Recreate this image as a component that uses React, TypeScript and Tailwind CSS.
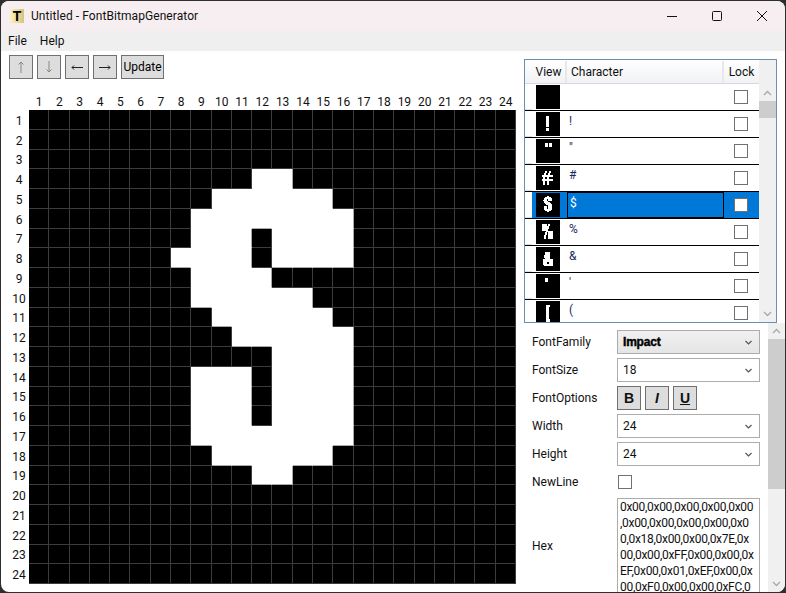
import React from "react";

// [row, firstCol, lastCol], 1-based, same data for the big grid and the $ thumbnail
const DOLLAR: [number, number, number][] = [
  [4, 12, 13],
  [5, 10, 15],
  [6, 9, 16],
  [7, 9, 11],
  [7, 13, 16],
  [8, 8, 11],
  [8, 13, 16],
  [9, 9, 12],
  [10, 9, 14],
  [11, 10, 15],
  [12, 11, 16],
  [13, 13, 16],
  [14, 9, 11],
  [14, 13, 16],
  [15, 9, 11],
  [15, 13, 16],
  [16, 9, 11],
  [16, 13, 16],
  [17, 9, 16],
  [18, 10, 15],
  [19, 12, 13],
];

const isOn = (r: number, c: number) => DOLLAR.some(([row, a, b]) => row === r && c >= a && c <= b);
const NUMS = Array.from({ length: 24 }, (_, i) => i + 1);

type Px = [number, number, number, number];

const dollarPx: Px[] = DOLLAR.map(([r, a, b]) => [a - 1, r - 1, b - a + 1, 1]);

const ROWS: { ch: string; px: Px[] }[] = [
  { ch: "", px: [] },
  { ch: "!", px: [[10, 4, 3, 11], [10, 16, 3, 3]] },
  { ch: '"', px: [[9, 4, 3, 4], [13, 4, 3, 4]] },
  { ch: "#", px: [[9, 5, 2, 2], [13, 5, 2, 2], [8, 7, 2, 4], [12, 7, 2, 4], [7, 11, 2, 8], [11, 11, 2, 8], [6, 9, 11, 2], [6, 13, 11, 2]] },
  { ch: "$", px: dollarPx },
  {
    ch: "%",
    px: [
      [6, 4, 5, 7], [12, 4, 2, 2], [11, 6, 2, 3], [10, 9, 2, 3], [9, 12, 2, 3], [8, 15, 2, 4],
      [12, 11, 5, 8],
    ],
  },
  { ch: "&", px: [[9, 5, 5, 3], [8, 8, 6, 3], [9, 11, 5, 1], [7, 12, 10, 3], [7, 15, 4, 3], [13, 15, 4, 3], [8, 17, 9, 2]] },
  { ch: "'", px: [[9, 4, 3, 4]] },
  { ch: "(", px: [[10, 4, 4, 2], [10, 6, 3, 12], [10, 18, 4, 3]] },
];

function Chevron({ className }: { className?: string }) {
  return (
    <svg width="7" height="5" viewBox="0 0 7 5" fill="none" className={className}>
      <path d="M.5 1l3 3 3-3" stroke="currentColor" strokeWidth="1.2" />
    </svg>
  );
}

function BigChevron({ up }: { up?: boolean }) {
  return (
    <svg width="9" height="6" viewBox="0 0 9 6" fill="none">
      <path d={up ? "M1 5l3.5-3.5L8 5" : "M1 1l3.5 3.5L8 1"} stroke="currentColor" strokeWidth="1.3" />
    </svg>
  );
}

function Arrow({ d, color }: { d: string; color: string }) {
  return (
    <svg width="12" height="12" viewBox="0 0 12 12" fill="none">
      <path d={d} stroke={color} strokeWidth="1" />
    </svg>
  );
}

function ToolButton({ children, wide }: { children: React.ReactNode; wide?: boolean }) {
  return (
    <button
      className={[
        "flex h-6 items-center justify-center border border-[#707070] bg-[#dddddd] text-xs text-black",
        wide ? "w-[43px]" : "w-6",
      ].join(" ")}
    >
      {children}
    </button>
  );
}

function Select({ value, impact }: { value: string; impact?: boolean }) {
  return (
    <div
      className={[
        "flex h-6 w-[143px] items-center justify-between border border-[#acacac] pl-[5px] pr-[7px]",
        impact ? "bg-gradient-to-b from-[#f0f0f0] to-[#e5e5e5]" : "bg-white",
      ].join(" ")}
    >
      <span className={impact ? "font-['Liberation_Sans',sans-serif] text-xs font-bold tracking-[-0.2px] text-black [-webkit-text-stroke:0.4px_black]" : "text-xs"}>
        {value}
      </span>
      <Chevron className="text-[#555]" />
    </div>
  );
}

function FormRow({ label, children }: { label: string; children: React.ReactNode }) {
  return (
    <div className="flex h-6 shrink-0 items-center">
      <span className="w-[85px] shrink-0 text-xs">{label}</span>
      {children}
    </div>
  );
}

const HEX = [
  "0x00,0x00,0x00,0x00,0x00",
  ",0x00,0x00,0x00,0x00,0x0",
  "0,0x18,0x00,0x00,0x7E,0x",
  "00,0x00,0xFF,0x00,0x00,0x",
  "EF,0x00,0x01,0xEF,0x00,0x",
  "00,0xF0,0x00,0x00,0xFC,0",
];

function Thumb({ px }: { px: Px[] }) {
  return (
    <svg width="24" height="24" viewBox="0 0 24 24" shapeRendering="crispEdges" className="block shrink-0">
      <rect width="24" height="24" fill="#000" />
      {px.map((p, i) => (
        <rect key={i} x={p[0]} y={p[1]} width={p[2]} height={p[3]} fill="#fff" />
      ))}
    </svg>
  );
}

function CharTable() {
  return (
    <div className="h-[264px] w-[253px] shrink-0 overflow-hidden border border-[#6d8db3] bg-[#f0f0f0]">
      <div className="flex h-full">
        <div className="w-[234px] shrink-0 overflow-hidden bg-white">
          <div className="flex h-6 border-b border-[#d5d9df] bg-gradient-to-b from-white to-[#f1f2f4] pl-[7px] pt-px text-xs">
            <div className="flex w-[35px] items-center justify-center border-r-2 border-[#e6e8eb]">View</div>
            <div className="flex w-[157px] items-center border-r-2 border-[#e6e8eb] pl-1">Character</div>
            <div className="flex flex-1 items-center justify-center">Lock</div>
          </div>
          {ROWS.map((row) => {
            const selected = row.ch === "$";
            return (
              <div key={row.ch} className="flex h-[27px] border-b border-black">
                <div className="w-[7px] shrink-0 border-b border-[#cfe3f5] bg-white" />
                <div className={["flex flex-1", selected ? "bg-[#0078d7]" : "bg-white"].join(" ")}>
                  <div className="w-[35px] shrink-0 pl-1 pt-px">
                    <Thumb px={row.px} />
                  </div>
                  <div
                    className={[
                      "w-[157px] shrink-0 pl-[2px] pt-[2px] text-xs leading-4",
                      selected ? "border border-black text-white" : "text-[#1c2c5a]",
                    ].join(" ")}
                  >
                    {row.ch}
                  </div>
                  <div className="flex flex-1 items-center justify-center pr-[2px]">
                    <div className="h-[14px] w-[14px] border border-[#707070] bg-white" />
                  </div>
                </div>
              </div>
            );
          })}
        </div>
        <div className="flex flex-1 flex-col items-center bg-[#f0f0f0] text-[#a8a8a8]">
          <div className="flex h-[41px] items-end justify-center pb-[5px]">
            <BigChevron up />
          </div>
          <div className="h-[17px] w-full bg-[#cdcdcd]" />
          <div className="flex flex-1 items-end pb-[5px]">
            <BigChevron />
          </div>
        </div>
      </div>
    </div>
  );
}

export default function App() {
  return (
    <div className="h-[593px] w-[786px] overflow-hidden bg-[#2e2e2e] font-['Roboto',sans-serif] text-xs text-[#111]">
      <div className="mx-px mt-px flex h-[591px] flex-col overflow-hidden rounded-[8px] bg-white">
        {/* title bar */}
        <div className="flex h-[30px] shrink-0 items-center bg-[#f6eef0]">
          <div className="ml-[9px] flex h-[14px] w-[14px] items-center justify-center bg-gradient-to-r from-[#fdf3c2] to-[#d9c27a] font-['Liberation_Sans',sans-serif] text-sm font-bold leading-none text-black">
            T
          </div>
          <span className="ml-[7px] text-xs tracking-[0.07px]">Untitled - FontBitmapGenerator</span>
          <div className="ml-auto mr-[18px] flex items-center gap-[35px]">
            <svg width="10" height="10" viewBox="0 0 10 10">
              <path d="M0 5.5h10" stroke="#111" strokeWidth="1" />
            </svg>
            <svg width="10" height="10" viewBox="0 0 10 10" fill="none">
              <rect x=".5" y=".5" width="9" height="9" rx="1" stroke="#111" />
            </svg>
            <svg width="10" height="10" viewBox="0 0 10 10" fill="none">
              <path d="M0 0l10 10M10 0L0 10" stroke="#111" strokeWidth="1" />
            </svg>
          </div>
        </div>

        {/* menu */}
        <div className="flex h-5 shrink-0 items-center gap-[13px] bg-[#efefef] pl-[7px] text-xs">
          <span>File</span>
          <span>Help</span>
        </div>

        <div className="flex min-h-0 flex-1">
          {/* left: toolbar and bitmap */}
          <div className="w-[523px] shrink-0">
            <div className="flex gap-1 pl-2 pt-1">
              <ToolButton>
                <Arrow d="M6 12V1M3.5 3.5L6 1l2.500 2.500" color="#8f8578" />
              </ToolButton>
              <ToolButton>
                <Arrow d="M6 0v11M3.500 8.500L6 11l2.500-2.500" color="#8f8578" />
              </ToolButton>
              <ToolButton>
                <Arrow d="M12 6.500H1M3 4.500L1 6.500l2 2" color="#222" />
              </ToolButton>
              <ToolButton>
                <Arrow d="M0 6.500h11M9 4.500l2 2-2 2" color="#222" />
              </ToolButton>
              <ToolButton wide>Update</ToolButton>
            </div>
            <div className="ml-[28px] mt-[15px] grid h-4 w-[487px] grid-cols-[repeat(24,minmax(0,1fr))] text-center text-xs leading-4">
              {NUMS.map((n) => (
                <span key={n}>{n}</span>
              ))}
            </div>
            <div className="flex">
              <div className="grid h-[474px] w-[28px] grid-rows-[repeat(24,minmax(0,1fr))] pl-2 text-center text-xs">
                {NUMS.map((n) => (
                  <span key={n} className="flex items-center justify-center pt-[2px]">
                    {n}
                  </span>
                ))}
              </div>
              <div className="grid h-[474px] w-[487px] grid-cols-[repeat(24,minmax(0,1fr))] grid-rows-[repeat(24,minmax(0,1fr))] bg-black">
                {NUMS.map((r) =>
                  NUMS.map((c) => {
                    const on = isOn(r, c);
                    return (
                      <div
                        key={`${r}-${c}`}
                        className={[
                          "border-b border-r",
                          on ? "bg-white" : "bg-black",
                          on
                            ? isOn(r, c + 1)
                              ? "border-r-white"
                              : "border-r-[#aaaaaa]"
                            : "border-r-[#3c3c3c]",
                          on
                            ? isOn(r + 1, c)
                              ? "border-b-white"
                              : "border-b-[#aaaaaa]"
                            : "border-b-[#3c3c3c]",
                        ].join(" ")}
                      />
                    );
                  }),
                )}
              </div>
            </div>
          </div>

          {/* right: char table and options */}
          <div className="flex min-w-0 flex-1 flex-col pt-2">
            <CharTable />
            <div className="flex min-h-0 flex-1">
              <div className="flex w-[244px] shrink-0 flex-col gap-1 overflow-hidden pl-2 pt-[7px]">
                <FormRow label="FontFamily">
                  <Select value="Impact" impact />
                </FormRow>
                <FormRow label="FontSize">
                  <Select value="18" />
                </FormRow>
                <FormRow label="FontOptions">
                  <div className="flex gap-1">
                    <button className="flex h-6 w-6 items-center justify-center border border-[#707070] bg-[#dddddd] font-['Liberation_Sans',sans-serif] text-sm font-bold">
                      B
                    </button>
                    <button className="flex h-6 w-6 items-center justify-center border border-[#707070] bg-[#dddddd] font-['Liberation_Sans',sans-serif] text-sm font-bold italic">
                      I
                    </button>
                    <button className="flex h-6 w-6 items-center justify-center border border-[#707070] bg-[#dddddd] font-['Liberation_Sans',sans-serif] text-sm font-bold underline">
                      U
                    </button>
                  </div>
                </FormRow>
                <FormRow label="Width">
                  <Select value="24" />
                </FormRow>
                <FormRow label="Height">
                  <Select value="24" />
                </FormRow>
                <FormRow label="NewLine">
                  <div className="ml-px h-[14px] w-[14px] border border-[#707070] bg-white" />
                </FormRow>
                <div className="flex h-[96px] shrink-0 items-center">
                  <span className="w-[85px] shrink-0 text-xs">Hex</span>
                  <div className="h-[96px] w-[143px] overflow-hidden border border-[#acacac] bg-white pl-[2px] text-xs leading-4 tracking-[-0.3px]">
                    {HEX.map((line) => (
                      <div key={line} className="whitespace-nowrap">
                        {line}
                      </div>
                    ))}
                  </div>
                </div>
              </div>
              <div className="flex w-[17px] shrink-0 flex-col items-center bg-[#f0f0f0] text-[#a8a8a8]">
                <div className="flex h-4 shrink-0 items-center justify-center">
                  <BigChevron up />
                </div>
                <div className="h-[150px] w-full shrink-0 bg-[#cdcdcd]" />
                <div className="flex flex-1 items-end pb-[5px]">
                  <BigChevron />
                </div>
              </div>
            </div>
          </div>
        </div>
      </div>
    </div>
  );
}
